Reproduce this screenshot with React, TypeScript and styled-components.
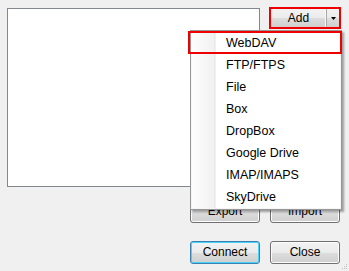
import React from "react";
import styled, { createGlobalStyle } from "styled-components";

const Global = createGlobalStyle`
  html, body { margin: 0; padding: 0; background: #f0f0f0; }
  body { font-family: "Liberation Sans", Arial, sans-serif; font-size: 12px; color: #000; }
`;

const Window = styled.div`
  position: relative;
  width: 349px;
  height: 271px;
  box-sizing: border-box;
  padding: 8px 0 0 7px;
  background: #f0f0f0;
  display: grid;
  grid-template-columns: 183px 70px 10px 70px;
  grid-template-rows: 179px 13px 23px 18px 23px;
  overflow: hidden;
`;

const ListBox = styled.div`
  grid-column: 1 / 3;
  grid-row: 1;
  background: #fff;
  border: 1px solid #828790;
  box-sizing: border-box;
`;

const SplitButton = styled.div`
  grid-column: 4;
  grid-row: 1;
  align-self: start;
  margin: -1px 0 0 -1px;
  width: 72px;
  height: 22px;
  box-sizing: border-box;
  border: 2px solid #ee0000;
  display: flex;
  background: linear-gradient(#f2f2f2 0%, #ebebeb 50%, #dddddd 51%, #cfcfcf 100%);
`;

const SplitMain = styled.div`
  flex: 1;
  display: flex;
  align-items: center;
  justify-content: center;
  border-right: 1px solid #a9a9a9;
  box-shadow: inset -1px 0 0 #f8f8f8;
  padding-bottom: 1px;
`;

const SplitArrow = styled.div`
  width: 12px;
  display: flex;
  align-items: center;
  justify-content: center;
`;

const Button = styled.div<{ $col: number; $row: number; $focus?: boolean }>`
  grid-column: ${(p) => p.$col};
  grid-row: ${(p) => p.$row};
  box-sizing: border-box;
  border: 1px solid ${(p) => (p.$focus ? "#3c7fb1" : "#707070")};
  border-radius: 3px;
  background: linear-gradient(#f2f2f2 0%, #ebebeb 50%, #dddddd 51%, #cfcfcf 100%);
  box-shadow: inset 0 0 0 1px ${(p) => (p.$focus ? "#48d3fb" : "#fcfcfc")};
  display: flex;
  align-items: center;
  justify-content: center;
  padding-bottom: 1px;
`;

const Menu = styled.div`
  position: absolute;
  left: 190px;
  top: 30px;
  width: 152px;
  box-sizing: border-box;
  border: 1px solid #979797;
  padding: 1px;
  background: #f5f5f5;
  box-shadow: 2px 2px 2px rgba(0, 0, 0, 0.35);
`;

const MenuBody = styled.div`
  display: flex;
  flex-direction: column;
  background: linear-gradient(90deg, #fdfdfd 0px, #f1f1f1 22px, #e2e3e3 23px, #ffffff 24px, #ffffff 100%);
`;

const MenuItem = styled.div`
  height: 22px;
  display: flex;
  align-items: center;
  padding-left: 34px;
  padding-bottom: 1px;
  box-sizing: border-box;
  font-family: "Liberation Sans", Arial, sans-serif;
  font-size: 12.5px;
`;

const Highlight = styled.div`
  position: absolute;
  left: -3px;
  top: 0px;
  width: 154px;
  height: 23px;
  box-sizing: border-box;
  border: 2px solid #ee0000;
`;

const Grip = styled.svg`
  position: absolute;
  right: 1px;
  bottom: 1px;
`;

const items = ["WebDAV", "FTP/FTPS", "File", "Box", "DropBox", "Google Drive", "IMAP/IMAPS", "SkyDrive"];

export default function App() {
  return (
    <>
      <Global />
      <Window>
        <ListBox />
        <SplitButton>
          <SplitMain>Add</SplitMain>
          <SplitArrow>
            <svg width="5" height="3" viewBox="0 0 5 3">
              <path d="M0 0H5L2.5 3Z" fill="#000" />
            </svg>
          </SplitArrow>
        </SplitButton>
        <Button $col={2} $row={3}>Export</Button>
        <Button $col={4} $row={3}>Import</Button>
        <Button $col={2} $row={5} $focus>Connect</Button>
        <Button $col={4} $row={5}>Close</Button>
        <Menu>
          <MenuBody>
            {items.map((it) => (
              <MenuItem key={it}>{it}</MenuItem>
            ))}
          </MenuBody>
          <Highlight />
        </Menu>
        <Grip width="7" height="7" viewBox="0 0 7 7">
          {[
            [5, 1], [3, 3], [5, 3], [1, 5], [3, 5], [5, 5],
          ].map(([x, y]) => (
            <rect key={`${x}-${y}`} x={x} y={y} width="1" height="1" fill="#bdbdbd" />
          ))}
        </Grip>
      </Window>
    </>
  );
}
